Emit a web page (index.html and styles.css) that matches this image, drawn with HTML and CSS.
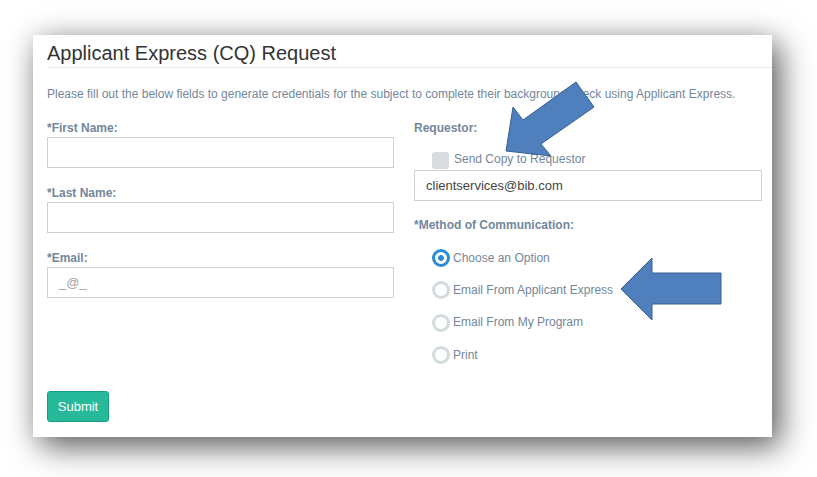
FILE: index.html
```html
<!DOCTYPE html>
<html>
<head>
<meta charset="utf-8">
<link rel="stylesheet" href="styles.css">
</head>
<body>
<div class="card">
  <h2 class="card-title">Applicant Express (CQ) Request</h2>
  <p class="intro">Please fill out the below fields to generate credentials for the subject to complete their background check using Applicant Express.</p>
  <div class="cols">
    <div class="col">
      <div class="field">
        <div class="label">*First Name:</div>
        <div class="input"></div>
      </div>
      <div class="field">
        <div class="label">*Last Name:</div>
        <div class="input"></div>
      </div>
      <div class="field">
        <div class="label">*Email:</div>
        <div class="input placeholder">_@_</div>
      </div>
    </div>
    <div class="col">
      <div class="label">Requestor:</div>
      <div class="check-row"><span class="checkbox"></span><span class="opt-text">Send Copy to Requestor</span></div>
      <div class="input filled">clientservices@bib.com</div>
      <div class="label method">*Method of Communication:</div>
      <div class="radios">
        <div class="radio-row"><span class="radio checked"></span><span class="opt-text">Choose an Option</span></div>
        <div class="radio-row"><span class="radio"></span><span class="opt-text">Email From Applicant Express</span></div>
        <div class="radio-row"><span class="radio"></span><span class="opt-text">Email From My Program</span></div>
        <div class="radio-row"><span class="radio"></span><span class="opt-text">Print</span></div>
      </div>
    </div>
  </div>
  <div class="actions"><button class="btn">Submit</button></div>
</div>
<svg class="arrows" width="817" height="477" viewBox="0 0 817 477">
  <polygon points="506,151 513,107 523,120 576,82 594,107 541,144 551,156" />
  <polygon points="621,289 652,258 652,273 721,273 721,304 652,304 652,320" />
</svg>
</body>
</html>
```

FILE: styles.css
```css
* { box-sizing: border-box; }
html, body {
  margin: 0;
  padding: 0;
  background: #ffffff;
  width: 817px;
  height: 477px;
  overflow: hidden;
}
body {
  position: relative;
  font-family: "Liberation Sans", Arial, sans-serif;
  font-size: 13px;
  color: #73879c;
}
.card {
  margin: 35px 0 0 33px;
  width: 739px;
  height: 402px;
  background: #fff;
  padding-left: 14px;
  box-shadow: 8px 10px 30px rgba(0, 0, 0, 0.6), 0 0 24px rgba(0, 0, 0, 0.12);
}
.card-title {
  margin: 0;
  padding: 6px 0 2px;
  font-size: 20px;
  line-height: 24px;
  font-weight: normal;
  color: #333;
  border-bottom: 1px solid #e6e9ed;
}
.intro {
  margin: 17px 0 16px;
  font-size: 12px;
  line-height: 18px;
  color: #73879c;
}
.cols {
  display: grid;
  grid-template-columns: 347px 348px;
  column-gap: 20px;
}
.field { margin-bottom: 16px; }
.label {
  font-weight: bold;
  font-size: 12px;
  line-height: 18px;
  color: #73879c;
}
.input {
  height: 31px;
  border: 1px solid #cfd3d6;
  background: #fff;
  padding: 0 11px;
  font-size: 13px;
  line-height: 29px;
  color: #444;
}
.input.placeholder { color: #a0a0a0; }
.check-row {
  display: flex;
  align-items: flex-start;
  margin: 15px 0 1px 18px;
  height: 17px;
}
.checkbox {
  width: 17px;
  height: 17px;
  border-radius: 3px;
  background: #d6dce0;
  margin-right: 5px;
  flex: none;
}
.opt-text {
  font-size: 12px;
  line-height: 14px;
  color: #73879c;
}
.method { margin-top: 15px; }
.radios { margin-top: 8px; }
.radio-row {
  display: flex;
  align-items: center;
  height: 32.33px;
  padding-left: 18px;
}
.radio-row .opt-text { line-height: 16px; margin-top: -1px; }
.radio {
  width: 18px;
  height: 18px;
  border-radius: 50%;
  border: 3px solid #d4dbdf;
  background: #fff;
  margin-right: 3px;
  flex: none;
}
.radio.checked {
  border-color: #2a8bd6;
  background: radial-gradient(circle, #2a8bd6 0 2.6px, #fff 3.2px);
}
.actions { margin-top: 20px; }
.btn {
  display: block;
  width: 62px;
  height: 31px;
  padding: 0;
  border: 1px solid #169f85;
  border-radius: 3px;
  background: #26b99a;
  color: #fff;
  font-family: "Liberation Sans", Arial, sans-serif;
  font-size: 13px;
}
.arrows {
  position: absolute;
  left: 0;
  top: 0;
  pointer-events: none;
}
.arrows polygon {
  fill: #4f7fbd;
  stroke: #38608f;
  stroke-width: 1;
  stroke-linejoin: miter;
}
```
